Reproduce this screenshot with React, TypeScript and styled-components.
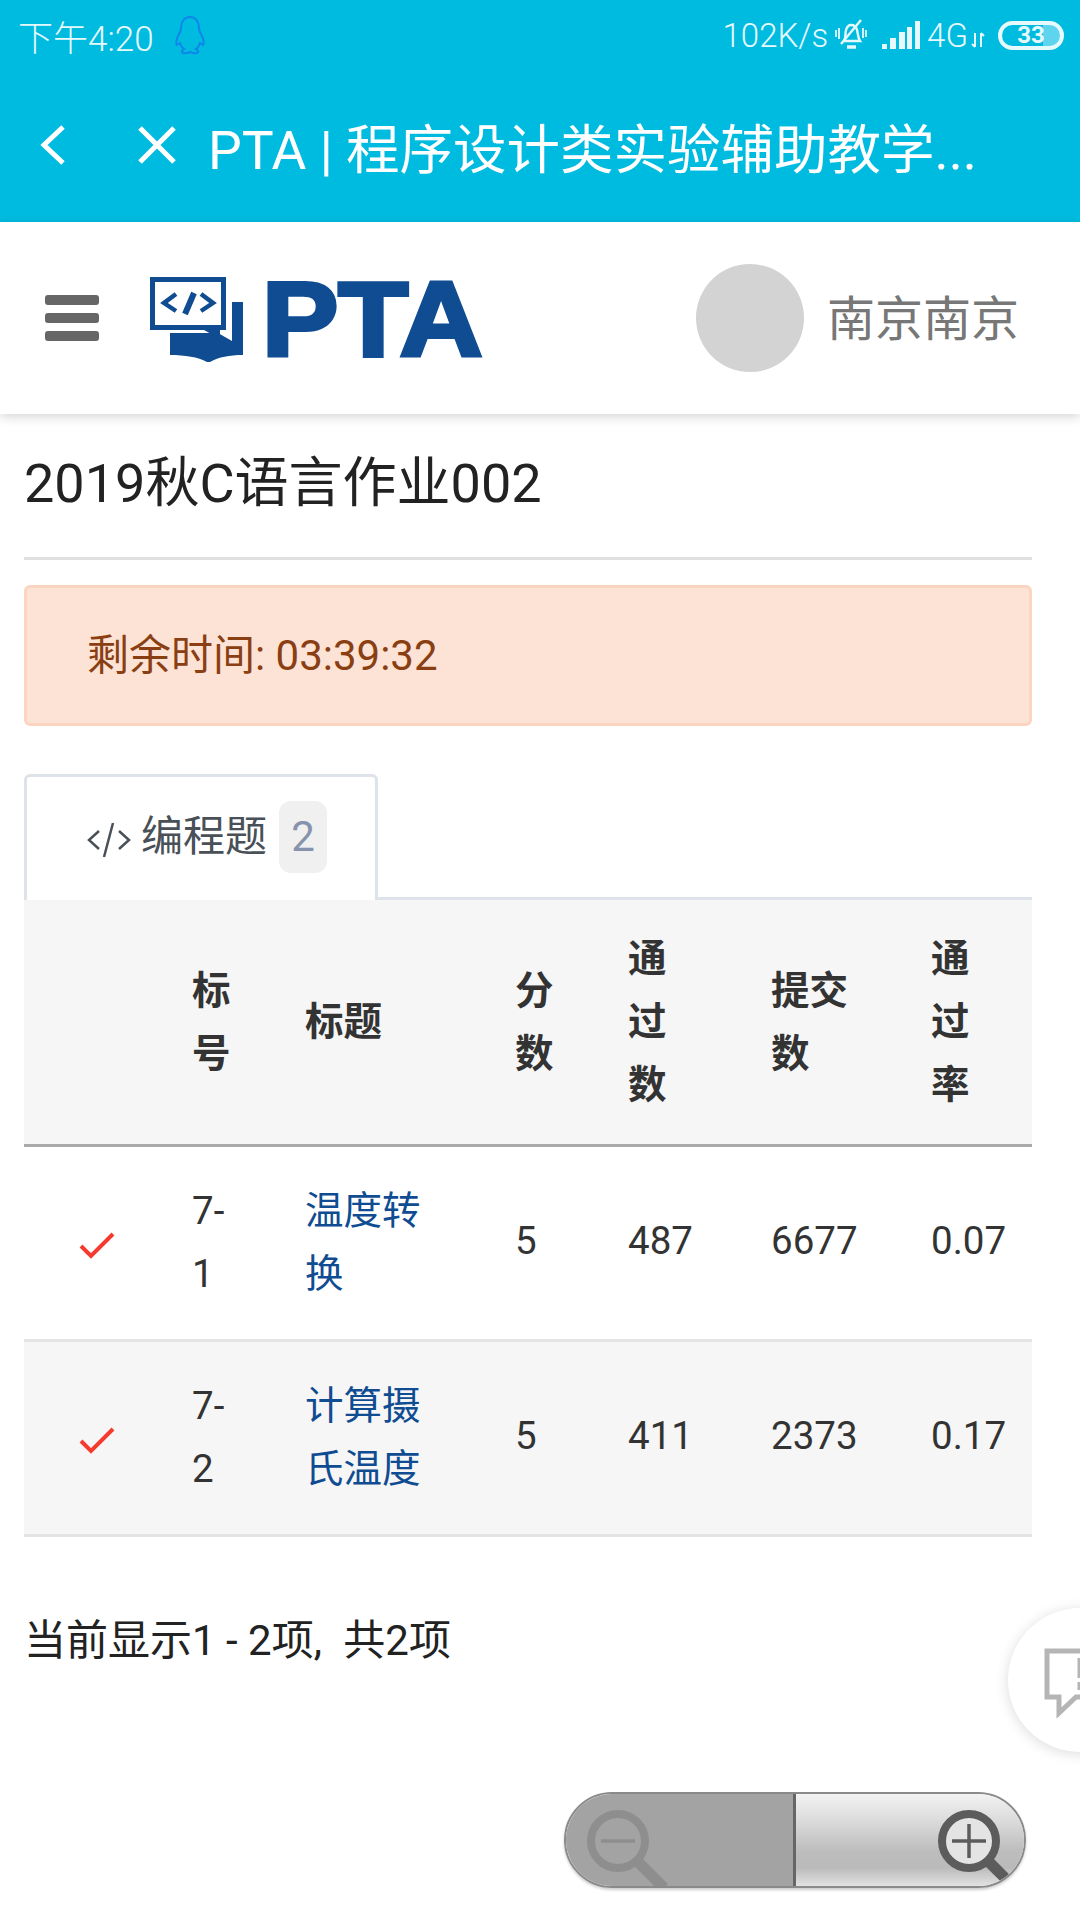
import styled, { createGlobalStyle } from 'styled-components'

const BLUE = '#0f4c92'
const FONT = `Roboto, "Noto Sans CJK SC", sans-serif`

const Global = createGlobalStyle`
    html, body {
        margin: 0;
        padding: 0;
        background: #fff;
    }
    * {
        box-sizing: border-box;
    }
`

const Page = styled.div`
    position: relative;
    width: 1080px;
    height: 1920px;
    overflow: hidden;
    background: #fff;
    color: #333;
    font-family: ${FONT};
`

/* phone chrome */
const Chrome = styled.header`
    background: #00bbe0;
    color: #fff;
`

const StatusBar = styled.div`
    height: 72px;
    padding: 0 16px 2px 18px;
    display: flex;
    align-items: center;
    justify-content: space-between;
    font-weight: 300;
    color: #e6f9fd;
`

const StatusGroup = styled.div<{ $size: number }>`
    display: flex;
    align-items: center;
    font-size: ${({ $size }) => $size}px;
`

const Speed = styled.span`
    margin-right: 6px;
`

const Network = styled.span`
    margin: 0 3px 0 7px;
`

const Battery = styled.div`
    width: 66px;
    height: 29px;
    margin-left: 13px;
    border: 4px solid #e6f9fd;
    border-radius: 15px;
    background: linear-gradient(to right, transparent 70%, #5ed4ee 70%);
    display: flex;
    align-items: center;
    justify-content: center;
    font-size: 24px;
    font-weight: 700;
    line-height: 1;
`

const TitleBar = styled.div`
    height: 150px;
    padding: 0 0 4px 40px;
    display: flex;
    align-items: center;
    font-size: 53.5px;
`

const BarIcon = styled.svg<{ $gap: number }>`
    flex: none;
    margin-right: ${({ $gap }) => $gap}px;
`

const PageTitle = styled.span`
    white-space: nowrap;
`

/* site nav */
const Nav = styled.nav`
    position: relative;
    height: 192px;
    padding: 0 61px 0 45px;
    display: flex;
    align-items: center;
    background: #fff;
    box-shadow: 0 3px 10px rgba(0, 0, 0, 0.16);
`

const Burger = styled.div`
    width: 54px;
    margin-right: 51px;
    display: flex;
    flex-direction: column;
    gap: 8px;
`

const BurgerBar = styled.span`
    height: 10px;
    border-radius: 3px;
    background: #666;
`

const Logo = styled.div`
    display: flex;
    align-items: center;
    gap: 18px;
    padding-top: 4px;
`

const LogoWord = styled.span`
    display: block;
    padding-bottom: 3px;
    font-family: "Liberation Sans", Arial, sans-serif;
    font-size: 106px;
    font-weight: 700;
    line-height: 1;
    color: ${BLUE};
    -webkit-text-stroke: 4px ${BLUE};
    transform: scaleX(1.08);
    transform-origin: left center;
`

const User = styled.div`
    margin-left: auto;
    display: flex;
    align-items: center;
    gap: 23px;
    font-size: 48px;
    color: #777;
`

const UserName = styled.span`
    padding-bottom: 6px;
`

const Avatar = styled.div`
    width: 108px;
    height: 108px;
    border-radius: 50%;
    background: #d3d3d3;
`

/* content */
const Main = styled.main`
    padding: 0 48px 0 24px;
`

const Heading = styled.h1`
    margin: 0;
    height: 146px;
    padding-top: 36px;
    border-bottom: 3px solid #e0e0e0;
    font-size: 54px;
    font-weight: 400;
    line-height: 68px;
    color: #222;
`

const Alert = styled.div`
    height: 141px;
    margin-top: 25px;
    padding: 0 0 8px 60px;
    display: flex;
    align-items: center;
    background: #fde3d6;
    border: 3px solid #fbd5c0;
    border-radius: 6px;
    font-size: 42px;
    color: #8a3f13;
`

const Tabs = styled.div`
    height: 126px;
    margin-top: 48px;
    border-bottom: 3px solid #dee2e9;
    display: flex;
`

const Tab = styled.div`
    width: 354px;
    height: 126px;
    padding: 24px 0 0 60px;
    display: flex;
    align-items: flex-start;
    background: #fff;
    border: 3px solid #dee2e9;
    border-bottom: 0;
    border-radius: 6px 6px 0 0;
    font-size: 42px;
    line-height: 72px;
    color: #495057;
`

const TabIcon = styled.svg`
    margin: 20px 10px 0 0;
`

const Badge = styled.span`
    width: 48px;
    height: 72px;
    margin-left: 12px;
    display: flex;
    align-items: center;
    justify-content: center;
    background: #f0f0f0;
    border-radius: 12px;
    color: #8793ad;
`

const Table = styled.table`
    width: 1008px;
    table-layout: fixed;
    border-collapse: collapse;
    font-size: 38.5px;
    line-height: 63px;
`

const Th = styled.th<{ $stack?: boolean }>`
    height: 245px;
    padding: 0 ${({ $stack }) => ($stack ? 60 : 24)}px 0 23px;
    background: #f6f6f6;
    border-bottom: 3px solid #aaa;
    text-align: left;
    font-weight: 700;
`

const Row = styled.tr<{ $shaded?: boolean }>`
    background: ${({ $shaded }) => ($shaded ? '#f6f6f6' : '#fff')};
`

const Td = styled.td`
    height: 195px;
    padding: 0 24px 0 23px;
    border-bottom: 3px solid #e4e4e4;
    vertical-align: middle;
`

const NarrowTd = styled(Td)`
    padding-right: 60px;
    padding-bottom: 2px;
`

const NumTd = styled(Td)`
    padding-bottom: 4px;
`

const CheckCell = styled(Td)`
    padding: 8px 0 0 55px;
`

const TitleLink = styled.a`
    color: ${BLUE};
    text-decoration: none;
`

const Summary = styled.p`
    margin: 74px 0 0;
    font-size: 42px;
    line-height: 60px;
    color: #222;
`

const Comma = styled.span`
    margin-right: 11px;
`

/* overlays */
const Feedback = styled.div`
    position: absolute;
    left: 1008px;
    top: 1608px;
    width: 144px;
    height: 144px;
    padding: 40px 0 0 36px;
    border-radius: 50%;
    background: #fff;
    box-shadow: 0 2px 14px rgba(0, 0, 0, 0.14);
`

const ZoomControl = styled.div`
    position: absolute;
    left: 564px;
    top: 1792px;
    width: 462px;
    height: 96px;
    display: flex;
    border: 2px solid #8a8a8a;
    border-radius: 48px;
    overflow: hidden;
    box-shadow: 0 2px 3px rgba(0, 0, 0, 0.2);
`

const ZoomOut = styled.div`
    width: 230px;
    padding: 16px 0 0 20px;
    background: #a3a3a3;
    border-right: 3px solid #666;
`

const ZoomIn = styled.div`
    flex: 1;
    padding: 16px 0 0 141px;
    background: linear-gradient(to bottom, #f2f2f2 0%, #dcdcdc 28%, #bdbdbd 62%, #bababa 80%, #e2e2e2 100%);
`

const COLS = [145, 113, 210, 113, 143, 160, 124]

const ROWS = [
    { id: '7-1', title: '温度转换', score: 5, passed: 487, submitted: 6677, rate: '0.07' },
    { id: '7-2', title: '计算摄氏温度', score: 5, passed: 411, submitted: 2373, rate: '0.17' },
]

function Penguin() {
    return (
        <svg width="36" height="40" viewBox="0 0 36 40" fill="none" stroke="#0f86ea" strokeWidth="2" style={{ marginLeft: 18 }}>
            <path d="M18 2c-6 0-9 5-9 11 0 3-1 5-3 8-2 4-2 8-1 9l3-2c1 3 2 5 4 6-2 1-3 3-1 4 3 1 5 0 7-1 2 1 4 2 7 1 2-1 1-3-1-4 2-1 3-3 4-6l3 2c1-1 1-5-1-9-2-3-3-5-3-8 0-6-3-11-9-11z" />
        </svg>
    )
}

function MutedBell() {
    return (
        <svg width="34" height="32" viewBox="0 0 34 32" fill="none" stroke="#e6f9fd" strokeWidth="2.4">
            <path d="M10 22c2-3 1-7 2-11 1-3 3-5 5-5s5 1 6 5c1 4 1 8 3 11z" />
            <path d="M13 28h9" strokeWidth="3.5" />
            <path d="M7 25 27 1" />
            <path d="M2 11v7M5 9v11M29 9v10M32 11v7" strokeWidth="1.8" />
        </svg>
    )
}

function Signal() {
    return (
        <svg width="38" height="28" viewBox="0 0 38 28" fill="#e6f9fd" style={{ marginLeft: 14 }}>
            <path d="M0 23h5v5H0zM8 17h6v11H8zM17 11h6v17h-6zM25 6h5v22h-5zM33 0h5v28h-5z" />
        </svg>
    )
}

function Arrows() {
    return (
        <svg width="14" height="18" viewBox="0 0 14 18" fill="none" stroke="#e6f9fd" strokeWidth="2" style={{ marginTop: 10 }}>
            <path d="M4 2v14M1 13l3 3M10 16V2M13 5l-3-3" />
        </svg>
    )
}

function LogoMark() {
    return (
        <svg width="94" height="86" viewBox="0 0 94 86">
            <path fill={BLUE} d="M20 56h48l14 8v-8h0V25h11v53c-14 0-24 2-33 7h-3c-9-5-22-7-37-7z" />
            <path fill={BLUE} fillRule="evenodd" d="M0 0h76v53H70v9l-16-9H0zM5 5v43h66V5z" />
            <path fill="none" stroke={BLUE} strokeWidth="4.5" d="M26 17 14 26l12 8M51 17l12 9-12 8" />
            <path fill="none" stroke={BLUE} strokeWidth="6" d="M44 16 35 37" />
        </svg>
    )
}

function Check() {
    return (
        <svg width="36" height="28" viewBox="0 0 36 28" fill="none" stroke="#f53b30" strokeWidth="4">
            <path d="M2 14 12 24 34 2" />
        </svg>
    )
}

function Magnifier({ plus, color }: { plus?: boolean; color: string }) {
    return (
        <svg width="84" height="80" viewBox="0 0 84 80" fill="none" stroke={color}>
            <circle cx="32" cy="31" r="27" strokeWidth="8" fill={plus ? '#e4e4e4' : 'none'} />
            <path d="M52 52 78 78" strokeWidth="11" />
            <path d="M15 31h34" strokeWidth="3.5" />
            {plus && <path d="M32 14v34" strokeWidth="3.5" />}
        </svg>
    )
}

export default function App() {
    return (
        <Page>
            <Global />
            <Chrome>
                <StatusBar>
                    <StatusGroup $size={35}>
                        下午4:20
                        <Penguin />
                    </StatusGroup>
                    <StatusGroup $size={33}>
                        <Speed>102K/s</Speed>
                        <MutedBell />
                        <Signal />
                        <Network>4G</Network>
                        <Arrows />
                        <Battery>33</Battery>
                    </StatusGroup>
                </StatusBar>
                <TitleBar>
                    <BarIcon $gap={72} width="26" height="40" viewBox="0 0 26 40" fill="none" stroke="#fff" strokeWidth="5">
                        <path d="M23 2 4 20l19 18" />
                    </BarIcon>
                    <BarIcon $gap={32} width="38" height="38" viewBox="0 0 38 38" fill="none" stroke="#fff" strokeWidth="5">
                        <path d="M2 2l34 34M36 2 2 36" />
                    </BarIcon>
                    <PageTitle>PTA | 程序设计类实验辅助教学...</PageTitle>
                </TitleBar>
            </Chrome>

            <Nav>
                <Burger>
                    <BurgerBar />
                    <BurgerBar />
                    <BurgerBar />
                </Burger>
                <Logo>
                    <LogoMark />
                    <LogoWord>PTA</LogoWord>
                </Logo>
                <User>
                    <Avatar />
                    <UserName>南京南京</UserName>
                </User>
            </Nav>

            <Main>
                <Heading>2019秋C语言作业002</Heading>
                <Alert>剩余时间: 03:39:32</Alert>
                <Tabs>
                    <Tab>
                        <TabIcon width="44" height="38" viewBox="0 0 44 38" fill="none" stroke="#495057" strokeWidth="2.5">
                            <path d="M12 10 2 19l10 9M32 10l10 9-10 9M26 2 17 36" />
                        </TabIcon>
                        编程题
                        <Badge>2</Badge>
                    </Tab>
                </Tabs>
                <Table>
                    <colgroup>
                        {COLS.map((w, i) => (
                            <col key={i} width={w} />
                        ))}
                    </colgroup>
                    <thead>
                        <tr>
                            <Th />
                            <Th>标号</Th>
                            <Th>标题</Th>
                            <Th>分数</Th>
                            <Th $stack>通过数</Th>
                            <Th>提交数</Th>
                            <Th $stack>通过率</Th>
                        </tr>
                    </thead>
                    <tbody>
                        {ROWS.map((row, i) => (
                            <Row key={row.id} $shaded={i % 2 === 1}>
                                <CheckCell>
                                    <Check />
                                </CheckCell>
                                <NarrowTd>{row.id}</NarrowTd>
                                <NarrowTd>
                                    <TitleLink href="#">{row.title}</TitleLink>
                                </NarrowTd>
                                <NumTd>{row.score}</NumTd>
                                <NumTd>{row.passed}</NumTd>
                                <NumTd>{row.submitted}</NumTd>
                                <NumTd>{row.rate}</NumTd>
                            </Row>
                        ))}
                    </tbody>
                </Table>
                <Summary>
                    当前显示1 - 2项<Comma>,</Comma> 共2项
                </Summary>
            </Main>

            <Feedback>
                <svg width="70" height="70" viewBox="0 0 70 70" fill="none" stroke="#b5b5b5" strokeWidth="5">
                    <path d="M3 3h64v46H32L15 65V49H3z" />
                    <path d="M38 10v20M38 34v8" strokeWidth="9" />
                </svg>
            </Feedback>
            <ZoomControl>
                <ZoomOut>
                    <Magnifier color="#8e8e8e" />
                </ZoomOut>
                <ZoomIn>
                    <Magnifier plus color="#5c5c5c" />
                </ZoomIn>
            </ZoomControl>
        </Page>
    )
}
